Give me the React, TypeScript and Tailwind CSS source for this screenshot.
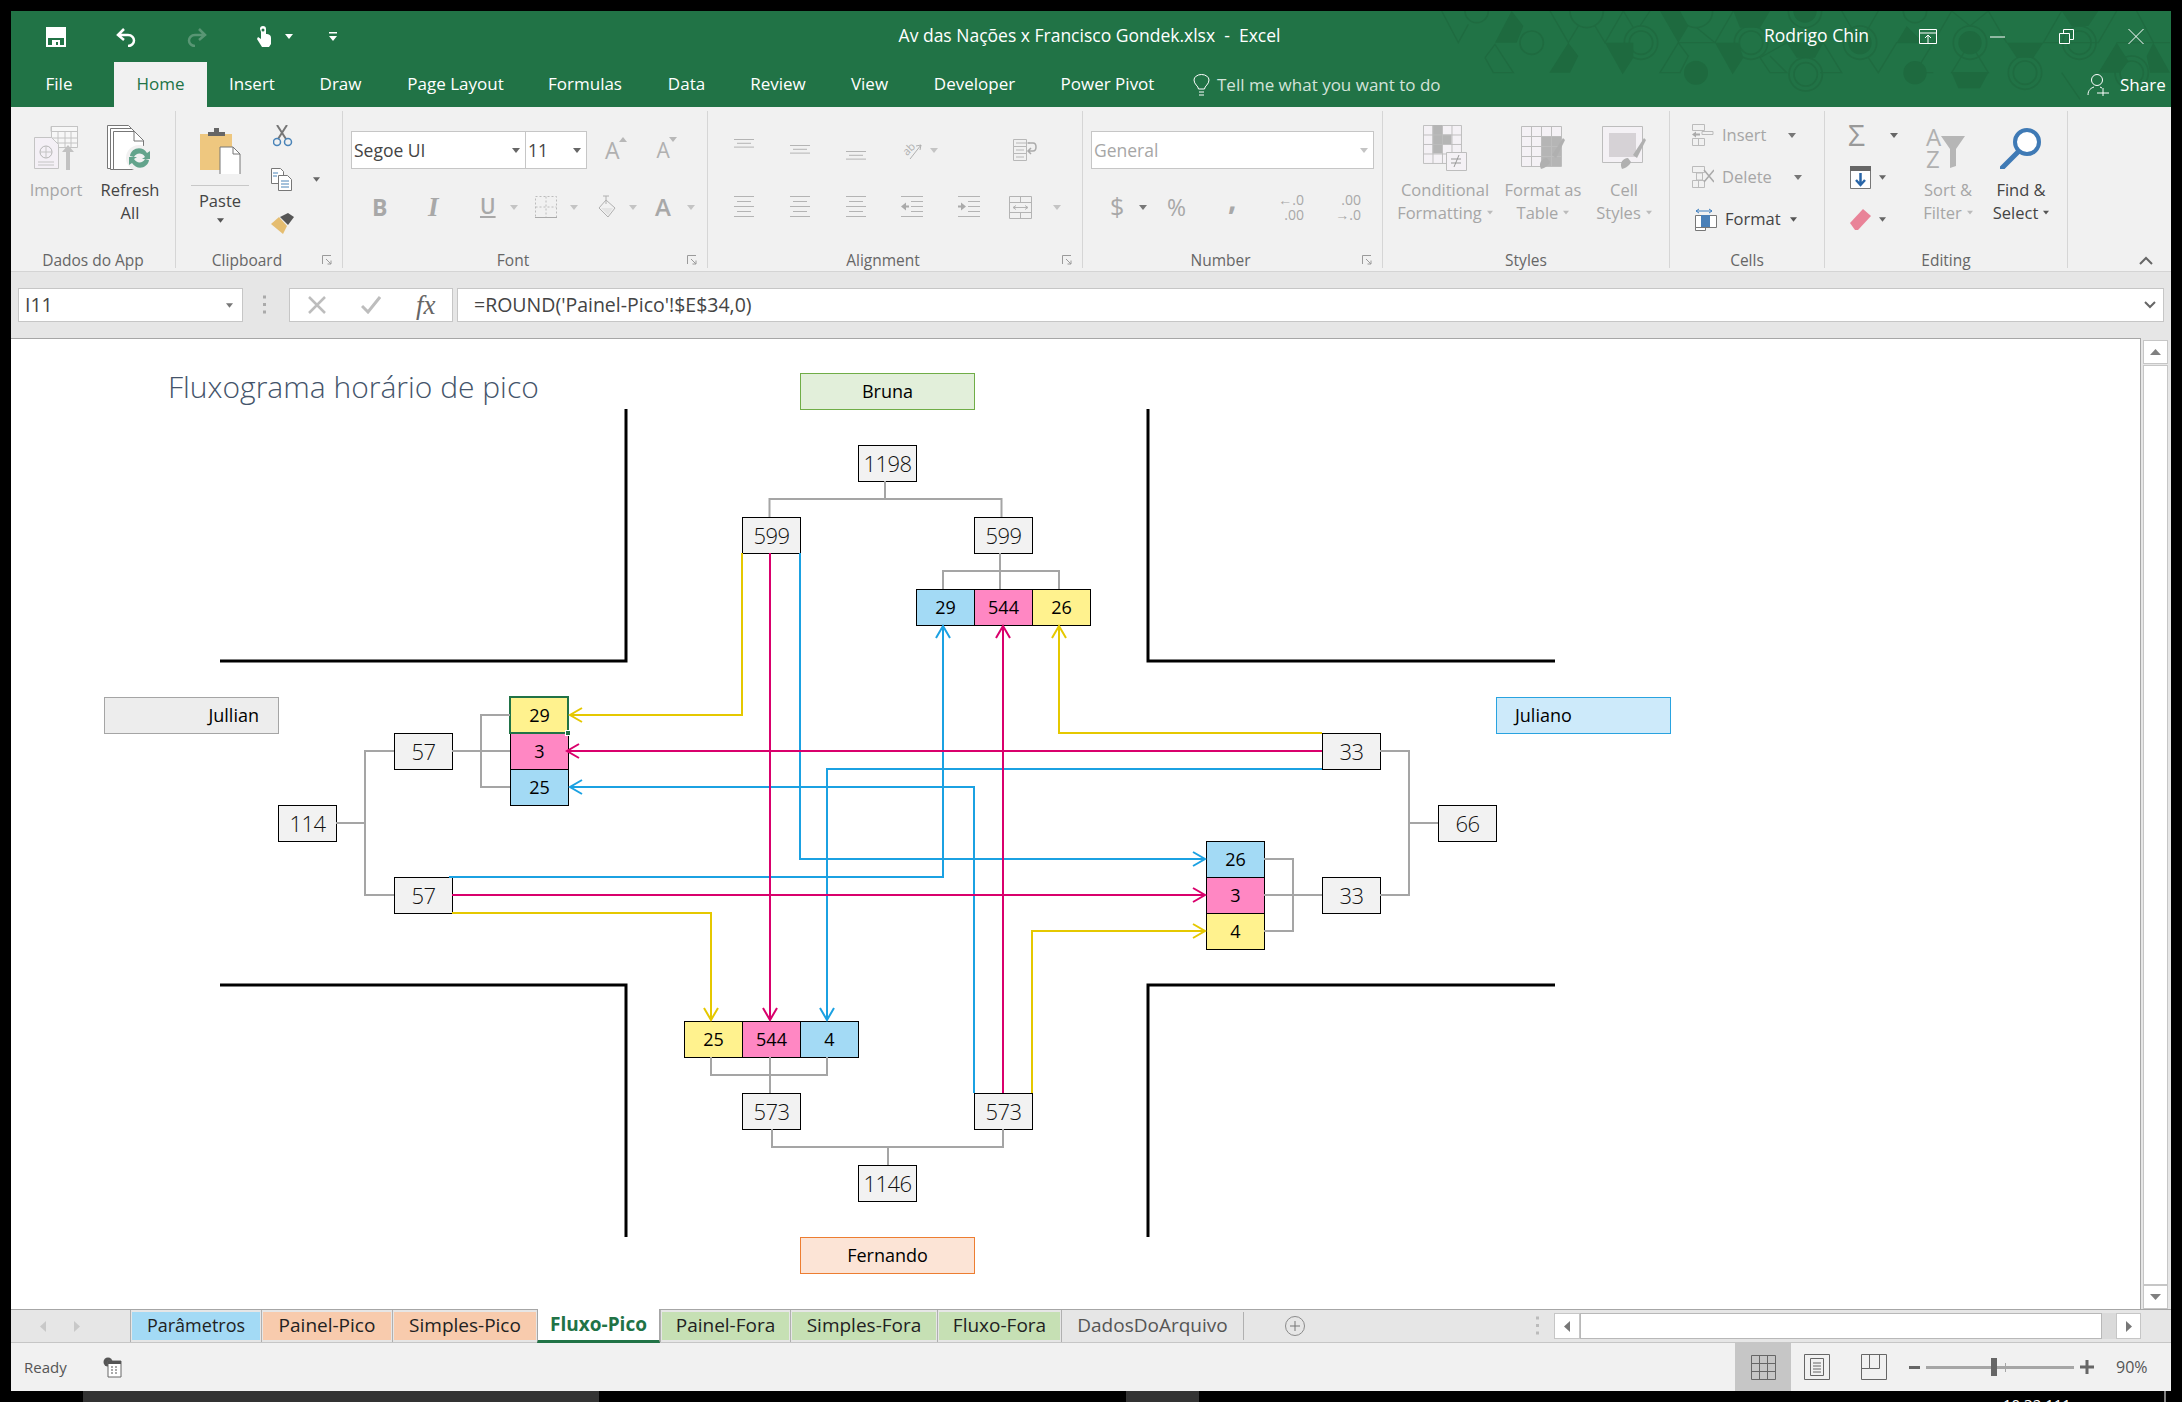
import React from "react";

const Caret = ({ c = "#666", w = 8 }: { c?: string; w?: number }) => (
  <svg width={w} height={5} viewBox="0 0 8 5" className="shrink-0"><path d="M0 0h8L4 5z" fill={c} /></svg>
);

function Pattern() {
  const d = "#1e6a3f";
  const s = "#1f6b40";
  const fills = [
    "215,0 165,95 230,95 250,45", "385,95 328,185 390,185 415,135", "495,95 580,95 580,140 548,190",
    "660,0 720,0 745,45 715,95", "825,95 895,95 910,140 878,190", "880,0 990,0 960,50 900,50",
    "1040,95 1150,95 1125,140 1070,140", "1370,95 1400,45 1450,95", "1700,95 1810,95 1780,140 1730,140",
    "1865,0 1975,0 1945,45 1895,45", "1975,185 2030,95 2065,150 2040,185", "2120,135 2140,95 2190,185 2130,185",
    "1535,185 1645,185 1620,232 1555,232",
  ];
  const lines = [
    "5,0 55,95 85,40", "135,140 165,100 220,185 160,185 135,140", "330,0 385,95 415,45", "465,45 495,95 550,0 580,50",
    "600,45 630,0", "715,95 660,185 720,185 745,135 715,95", "715,95 825,95 880,0", "770,50 825,95",
    "990,135 1040,185 990,185 960,140 1040,95", "1150,95 1205,185 1140,185", "1205,0 1260,95 1315,0",
    "1285,140 1315,185 1370,95 1480,95 1535,0 1590,45 1645,0", "1480,95 1425,185 1480,185",
    "1590,95 1535,185 1645,185 1590,95", "1700,95 1645,0", "1810,95 1865,0", "1865,185 1920,265", "1810,95 1975,95 2030,0",
    "2030,95 2190,95", "2090,0 2140,95",
  ];
  const rings: [number, number, number][] = [
    [110, 0, 35], [275, 95, 35], [440, 0, 50], [603, 95, 35], [603, 95, 50], [768, 0, 50], [933, 95, 35], [933, 95, 50],
    [1095, 0, 50], [1097, 190, 35], [1097, 190, 50], [1260, 95, 50], [1425, 0, 35], [1590, 95, 50], [1755, 185, 35],
    [1755, 185, 50], [1918, 95, 35], [1918, 95, 50], [2075, 185, 35], [2075, 185, 50],
  ];
  const dots: [number, number, number][] = [[768, 185, 36], [1095, 0, 35], [1260, 95, 35], [1425, 185, 35], [1590, 95, 35]];
  return (
    <svg className="absolute right-0 top-0 pointer-events-none" width={731} height={96} viewBox="0 0 2193 288">
      {lines.map((p, i) => <polyline key={i} points={p} fill="none" stroke={s} strokeWidth={4} />)}
      {rings.map(([x, y, r], i) => <circle key={i} cx={x} cy={y} r={r} fill="none" stroke={s} strokeWidth={5} />)}
      {fills.map((p, i) => <polygon key={i} points={p} fill={d} />)}
      {dots.map(([x, y, r], i) => <circle key={i} cx={x} cy={y} r={r} fill={d} />)}
    </svg>
  );
}

function TitleBar() {
  return (
    <div className="flex items-center h-[51px] text-white text-[17.500px] whitespace-nowrap relative z-10">
      <svg width={20} height={20} viewBox="0 0 20 20" className="ml-[35px]"><path d="M1 1h18v18H1z" fill="none" stroke="#fff" strokeWidth={2} /><path d="M1 1h18v10H1zM6 19v-6h8v6h-2v-4h-2v4z" fill="#fff" /></svg>
      <svg width={22} height={20} viewBox="0 0 22 20" className="ml-[49px]"><path d="M3 8h10c4 0 6 3 6 5.500S17 19 13 19M9 2L3 8l6 5" fill="none" stroke="#fff" strokeWidth={2.500} /></svg>
      <svg width={22} height={20} viewBox="0 0 22 20" className="ml-[49px] opacity-25"><path d="M19 8H9c-4 0-6 3-6 5.500S5 19 9 19M13 2l6 6-6 5" fill="none" stroke="#fff" strokeWidth={2.500} /></svg>
      <svg width={15} height={21} viewBox="0 0 15 21" className="ml-[48px]"><path d="M4 3a3 3 0 0 1 6 0v5c3 0 5 1 5 4v6l-2 3H6L1 13l1-2 3 2V6z" fill="#fff" /><circle cx={7} cy={4} r={1.500} fill="#217346" /></svg>
      <span className="ml-[14px]"><Caret c="#fff" /></span>
      <svg width={8} height={9} viewBox="0 0 8 9" className="ml-[36px]"><path d="M0 0h8v1.500H0zM0 4h8L4 9z" fill="#fff" /></svg>
      <span className="ml-[567px] w-[371px] flex justify-center whitespace-pre pb-[2px]">Av das Nações x Francisco Gondek.xlsx  -  Excel</span>
      <span className="ml-[490px] w-[103px] flex justify-center pb-[2px]">Rodrigo Chin</span>
      <svg width={18} height={15} viewBox="0 0 18 15" className="ml-[51px]"><path d="M.5.5h17v14H.5zM.5 4h17" fill="none" stroke="#fff" /><path d="M9 14V6M6 9l3-3 3 3" fill="none" stroke="#fff" /></svg>
      <svg width={15} height={2} viewBox="0 0 15 2" className="ml-[53px]"><path d="M0 1h15" stroke="#fff" /></svg>
      <svg width={15} height={15} viewBox="0 0 15 15" className="ml-[54px]"><path d="M.5 4.500h10v10H.5zM4.500 4.500v-4h10v10h-4" fill="none" stroke="#fff" /></svg>
      <svg width={16} height={15} viewBox="0 0 16 15" className="ml-[54px]"><path d="M.5 0l15 15M15.500 0L.5 15" stroke="#fff" /></svg>
    </div>
  );
}

const menu: [string, string][] = [
  ["File", "w-[103px] pr-[7px]"], ["Home", "w-[93px]"], ["Insert", "w-[90px]"], ["Draw", "w-[87px]"], ["Page Layout", "w-[143px]"],
  ["Formulas", "w-[116px]"], ["Data", "w-[87px]"], ["Review", "w-[96px]"], ["View", "w-[87px]"], ["Developer", "w-[123px]"], ["Power Pivot", "w-[143px]"],
];

function TabRow() {
  return (
    <div className="flex items-stretch h-[45px] text-white text-[17px] whitespace-nowrap relative z-10">
      {menu.map(([t, w]) => (
        <div key={t} className={`${w} flex items-center justify-center pb-[2px] ${t === "Home" ? "bg-[#f1f1f1] text-[#217346]" : ""}`}>{t}</div>
      ))}
      <div className="flex items-center text-[#d3e3da]">
        <svg width={17} height={22} viewBox="0 0 17 22" className="ml-[14px]"><path d="M5.500 15c0-3-4.500-4.500-4.500-9a7.500 5.500 0 0 1 15 0c0 4.500-4.500 6-4.500 9zM6 18h5M6 21h5" fill="none" stroke="#fff" /></svg>
        <span className="ml-[7px] w-[225px]">Tell me what you want to do</span>
        <svg width={22} height={24} viewBox="0 0 22 24" className="ml-[645px]"><circle cx={10} cy={7} r={5.500} fill="none" stroke="#fff" /><path d="M1 22c0-5 3-7 6-8M13 14l2 1M10 20h12M16 15v8" fill="none" stroke="#fff" /></svg>
        <span className="ml-[11px] text-white">Share</span>
      </div>
    </div>
  );
}

const Launcher = () => (
  <svg width={10} height={10} viewBox="0 0 10 10" className="absolute right-[10px] top-[3px]"><path d="M.5 9V.5H9M4 4l5 5M9 5.500V9H5.500" fill="none" stroke="#9a9a9a" /></svg>
);

function Group({ w, label, launcher, children }: { w: string; label: string; launcher?: boolean; children: React.ReactNode }) {
  return (
    <div className={`${w} h-[157px] mt-[4px] border-r border-[#d6d6d6] flex flex-col shrink-0`}>
      <div className="h-[141px]">{children}</div>
      <div className={`h-[16px] relative flex items-center justify-center text-[15.500px] leading-[16px] text-[#666] ${launcher ? "pr-[24px]" : ""}`}>
        {label}
        {launcher && <Launcher />}
      </div>
    </div>
  );
}

function Big({ w, icon, lines, dis, caret }: { w: string; icon: React.ReactNode; lines: string[]; dis?: boolean; caret?: boolean }) {
  return (
    <div className={`${w} flex flex-col items-center pt-[14px] ${dis ? "text-[#a6a6a6]" : "text-[#444]"}`}>
      <div className="h-[46px] flex items-center justify-center">{icon}</div>
      <div className="mt-[7px] h-[23px] leading-[23px] whitespace-nowrap">{lines[0]}</div>
      <div className="h-[23px] leading-[23px] whitespace-nowrap flex items-center gap-[5px]">{lines[1]}{caret && <Caret c={dis ? "#bbb" : "#555"} w={6} />}</div>
    </div>
  );
}

const Lines = ({ rows, h = 22 }: { rows: number; h?: number }) => {
  const out = [];
  for (let i = 0; i < rows; i++) {
    const short = i % 2 === 1;
    const x = short ? 3 : 0;
    const l = short ? 14 : 20;
    out.push(<path key={i} d={`M${x} ${i * (rows === 3 ? 3.800 : 5) + 0.5}h${l}`} stroke="#b4b4b4" />);
  }
  return <svg width={20} height={h} viewBox={`0 0 20 ${h}`} className="shrink-0">{out}</svg>;
};

const grayGrid = (dark: string) => (
  <g fill="none" stroke="#bdbdbd">
    <path d="M.5.5h40v40H.5z" fill="#f4f1f5" />
    <path d={dark} fill="#b5b5b5" stroke="none" />
    <path d="M.5 10.500h40M.5 20.500h40M.5 30.500h40M10.500.5v40M20.500.5v40M30.500.5v40" />
  </g>
);

function Ribbon() {
  return (
    <div className="flex h-[165px] bg-[#f1f1f1] text-[16.500px] border-b border-[#d4d4d4] relative">
      <Group w="w-[165px]" label="Dados do App">
        <div className="flex pl-[8px]">
          <Big w="w-[74px]" dis lines={["Import", ""]} icon={
            <svg width={44} height={44} viewBox="0 0 44 44"><path d="M17.500.5h26v21h-26z" fill="#f7f7f7" stroke="#c4c4c4" /><path d="M17 .5h27v5H17zM24 6v15M31 6v15M37 6v15M18 12h25M18 17h25" fill="none" stroke="#c4c4c4" /><path d="M.5 11.500h17l7 7v24H.5z" fill="#f4f0f6" stroke="#c4c4c4" /><circle cx={12} cy={26} r={6} fill="none" stroke="#b4b4b4" /><path d="M6 26h12M12 20v12M4 36h16M4 39h16" stroke="#c4c4c4" /><path d="M36 44V26h-4l6-7 6 7h-4v18z" fill="#c2c2c2" transform="translate(-4 0)" /></svg>} />
          <Big w="w-[74px]" lines={["Refresh", "All"]} icon={
            <svg width={46} height={46} viewBox="0 0 46 46"><path d="M.5.5h21l8 8v35H.5z" fill="#fff" stroke="#777" /><path d="M3.500 3.500h21l8 8v33H3.500z" fill="#fff" stroke="#777" /><path d="M6.500 6.500h21l9 9v29h-30z" fill="#fff" stroke="#777" /><path d="M27 6v10h10" fill="none" stroke="#777" /><circle cx={32} cy={33} r={13} fill="#f1f1f1" /><path d="M23 31c1-8 12-11 17-3l3-2v8h-8l3-2c-3-5-9-4-11 0zM42 35c-1 8-12 11-17 3l-3 2v-8h8l-3 2c3 5 9 4 11 0z" fill="#63a48c" /></svg>} />
        </div>
      </Group>
      <Group w="w-[167px]" label="Clipboard" launcher>
        <div className="flex pl-[15px]">
          <div className="w-[58px] flex flex-col items-center pt-[17px] text-[#444]">
            <svg width={41} height={46} viewBox="0 0 41 46"><path d="M0 6h32v36H0z" fill="#eec77f" /><path d="M8 8V4h6V0h5v4h6v4z" fill="#666" /><path d="M20 19h13l7 7v21H20z" fill="#fff" stroke="#777" /><path d="M33 19v7h7" fill="none" stroke="#777" /></svg>
            <div className="w-[58px] mt-[11px] border-t border-[#c8c8c8]" />
            <div className="mt-[3px] h-[23px] leading-[23px]">Paste</div>
            <div className="mt-[6px]"><Caret c="#555" w={7} /></div>
          </div>
          <div className="pl-[22px] pt-[14px] flex flex-col">
            <svg width={20} height={22} viewBox="0 0 20 22" className="ml-[2px]"><path d="M4 0l9 14M14 0L5 14" stroke="#777" strokeWidth={2} fill="none" /><circle cx={4} cy={17} r={3.500} fill="none" stroke="#4a84b8" strokeWidth={1.500} /><circle cx={15} cy={17} r={3.500} fill="none" stroke="#4a84b8" strokeWidth={1.500} /></svg>
            <div className="flex items-center mt-[21px]">
              <svg width={21} height={23} viewBox="0 0 21 23"><path d="M.5.5h9l3 3v12H.5z" fill="#fff" stroke="#777" /><path d="M7.500 7.500h9l4 4v11h-13z" fill="#fff" stroke="#777" /><path d="M10 13h8M10 16h8M10 19h8M2 5h5M2 8h4" stroke="#4a84b8" /></svg>
              <span className="ml-[21px]"><Caret c="#666" w={7} /></span>
            </div>
            <svg width={23} height={21} viewBox="0 0 23 21" className="mt-[22px]"><path d="M0 11l8-7 8 9-4 8z" fill="#e5bd70" /><path d="M9 4l8 8 6-8-6-4z" fill="#555" /></svg>
          </div>
        </div>
      </Group>
      <Group w="w-[365px]" label="Font" launcher>
        <div className="flex items-center pl-[8px] pt-[20px] text-[17.500px]">
          <div className="w-[175px] h-[38px] bg-white border border-[#c6c6c6] flex items-center justify-between pl-[2px] pr-[5px] text-[#444]">Segoe UI<Caret c="#666" /></div>
          <div className="w-[62px] h-[38px] -ml-px bg-white border border-[#c6c6c6] flex items-center justify-between pl-[2px] pr-[5px] text-[#444]">11<Caret c="#666" /></div>
          <div className="flex items-start ml-[18px] text-[#b0b0b0] text-[23px] leading-[30px] font-medium">
            <span>A</span><svg width={8} height={5} viewBox="0 0 8 5" className="mt-[2px] -ml-[1px]"><path d="M0 5h8L4 0z" fill="#b8b8b8" /></svg>
            <span className="ml-[30px] text-[21px]">A</span><svg width={8} height={5} viewBox="0 0 8 5" className="mt-[2px] -ml-[1px]"><path d="M0 0h8L4 5z" fill="#b8b8b8" /></svg>
          </div>
        </div>
        <div className="flex items-center h-[30px] mt-[23px] text-[#a8a8a8]">
          <span className="ml-[29px] w-[13px] font-bold text-[23px]">B</span>
          <span className="ml-[43px] w-[12px] italic font-bold font-['Liberation_Serif',serif] text-[27px]">I</span>
          <span className="ml-[40px] w-[15px] underline font-semibold text-[21px]">U</span>
          <span className="ml-[15px]"><Caret c="#c4c4c4" /></span>
          <svg width={22} height={22} viewBox="0 0 22 22" className="ml-[17px]"><path d="M.5.5h21v21H.5zM.5 11h21M11 .5v21" fill="none" stroke="#bcbcbc" strokeDasharray="2 2" /><path d="M0 21.500h22" stroke="#aaa" /></svg>
          <span className="ml-[13px]"><Caret c="#c4c4c4" /></span>
          <svg width={20} height={24} viewBox="0 0 20 24" className="ml-[19px]"><path d="M9 5l9 8-7 9-9-9zM9 9V1M6 1h6" fill="none" stroke="#b0b0b0" /><path d="M4 13h12l-5 7z" fill="#e4e4e4" /></svg>
          <span className="ml-[12px]"><Caret c="#c4c4c4" /></span>
          <span className="ml-[18px] w-[17px] font-semibold text-[24px]">A</span>
          <span className="ml-[15px]"><Caret c="#c4c4c4" /></span>
        </div>
      </Group>
      <Group w="w-[375px]" label="Alignment" launcher>
        <div className="flex items-start h-[26px] mt-[26px]">
          <span className="ml-[26px] mt-[2px]"><Lines rows={3} h={10} /></span>
          <span className="ml-[36px] mt-[8px]"><Lines rows={3} h={10} /></span>
          <span className="ml-[36px] mt-[14px]"><Lines rows={3} h={10} /></span>
          <svg width={20} height={20} viewBox="0 0 20 20" className="ml-[36px] mt-[4px] overflow-visible"><text x={1} y={12} fontSize={11} fill="#b0b0b0" transform="rotate(-45 7 9)">ab</text><path d="M8 18L19 4M19 4l-1 5M19 4l-5 1" fill="none" stroke="#b0b0b0" /></svg>
          <span className="ml-[8px] mt-[11px]"><Caret c="#c4c4c4" /></span>
          <svg width={24} height={22} viewBox="0 0 24 22" className="ml-[75px] mt-[2px]"><path d="M.5.5h13v7H.5zM.5 7.500h13v7H.5zM.5 14.500h13v7H.5zM3 4h14M3 11h8M3 18h8" fill="none" stroke="#b8b8b8" /><path d="M15 4h5c4 0 4 8 0 8h-4M18 9l-3 3 3 3" fill="none" stroke="#aaa" strokeWidth={1.500} /></svg>
        </div>
        <div className="flex items-center h-[30px] mt-[29px]">
          <span className="ml-[26px] flex"><Lines rows={5} /></span>
          <span className="ml-[36px] flex"><Lines rows={5} /></span>
          <span className="ml-[36px] flex"><Lines rows={5} /></span>
          <svg width={23} height={22} viewBox="0 0 23 22" className="ml-[35px]"><path d="M0 .5h22M10 5.500h12M10 10.500h12M10 15.500h12M0 20.500h22" stroke="#b4b4b4" /><path d="M0 10.500l5-4v3h3v2H5v3z" fill="#aaa" /></svg>
          <svg width={23} height={22} viewBox="0 0 23 22" className="ml-[34px]"><path d="M0 .5h22M10 5.500h12M10 10.500h12M10 15.500h12M0 20.500h22" stroke="#b4b4b4" /><path d="M8 10.500l-5-4v3H0v2h3v3z" fill="#aaa" /></svg>
          <svg width={24} height={23} viewBox="0 0 24 23" className="ml-[28px]"><path d="M.5.5h22v22H.5zM.5 6.500h22M.5 16.500h22M11.500.5v6M11.500 16.500v6M4 11.500h15M4 11.500l3-2M4 11.500l3 2M19 11.500l-3-2M19 11.500l-3 2" fill="none" stroke="#b4b4b4" /></svg>
          <span className="ml-[20px]"><Caret c="#c4c4c4" /></span>
        </div>
      </Group>
      <Group w="w-[300px]" label="Number" launcher>
        <div className="pl-[8px] pt-[20px] text-[17.500px]">
          <div className="w-[283px] h-[38px] bg-white border border-[#c6c6c6] flex items-center justify-between pl-[2px] pr-[5px] text-[#a6a6a6]">General<Caret c="#c4c4c4" /></div>
        </div>
        <div className="flex items-center h-[30px] mt-[23px] text-[#a8a8a8]">
          <span className="ml-[27px] w-[12px] text-[25px]">$</span>
          <span className="ml-[17px]"><Caret c="#777" /></span>
          <span className="ml-[20px] w-[21px] text-[23px]">%</span>
          <span className="ml-[40px] w-[10px] text-[30px] font-bold leading-[20px] pb-[16px]">,</span>
          <span className="ml-[40px] w-[26px] flex flex-col text-[14px] leading-[15px] items-end"><span>←.0</span><span>.00</span></span>
          <span className="ml-[31px] w-[26px] flex flex-col text-[14px] leading-[15px] items-end"><span>.00</span><span>→.0</span></span>
        </div>
      </Group>
      <Group w="w-[287px]" label="Styles">
        <div className="flex pl-[12px]">
          <Big w="w-[100px]" dis caret lines={["Conditional", "Formatting"]} icon={
            <svg width={44} height={46} viewBox="0 0 44 46"><g transform="scale(.95)">{grayGrid("M10 0h10v10h10v10H20v10H10z")}</g><path d="M23.500 27.500h20v18h-20z" fill="#f4f1f5" stroke="#bdbdbd" /><path d="M28 34h10M28 38h10M36 30l-5 12" stroke="#999" fill="none" /></svg>} />
          <Big w="w-[96px]" dis caret lines={["Format as", "Table"]} icon={
            <svg width={44} height={44} viewBox="0 0 44 44"><g>{grayGrid("M20 10h20v30H20z")}</g><path d="M20 43c-3-6 1-11 6-11l3 4c-1 3-5 6-9 7zM31 29l11-17 2 2-9 18z" fill="#b0b0b0" /></svg>} />
          <Big w="w-[66px]" dis caret lines={["Cell", "Styles"]} icon={
            <svg width={44} height={44} viewBox="0 0 44 44"><path d="M.5.5h40v36H.5z" fill="#f4f1f5" stroke="#bdbdbd" /><path d="M7 7h27v24H7z" fill="#d6d2d6" /><path d="M20 43c-3-6 1-11 6-11l3 4c-1 3-5 6-9 7zM31 29l11-17 2 2-9 18z" fill="#b0b0b0" /></svg>} />
        </div>
      </Group>
      <Group w="w-[155px]" label="Cells">
        <div className="flex flex-col pt-[3px]">
          <div className="flex items-center h-[42px] text-[#a6a6a6]">
            <svg width={22} height={22} viewBox="0 0 22 22" className="ml-[22px]"><path d="M.5.5h12v6H.5zM.5 14.500h12v7H.5zM6.500 14.500v7M10 10.500h11v-3H10z" fill="none" stroke="#bbb" /><path d="M0 10.500l4-3v2h4v2H4v2z" fill="#aaa" /></svg>
            <span className="ml-[8px] w-[66px]">Insert</span><Caret c="#777" />
          </div>
          <div className="flex items-center h-[42px] text-[#a6a6a6]">
            <svg width={22} height={22} viewBox="0 0 22 22" className="ml-[22px]"><path d="M.5.5h12v6H.5zM.5 14.500h12v7H.5zM6.500 14.500v7M4.500 7v7h6V7z" fill="none" stroke="#bbb" /><path d="M12 4l10 12M22 4L12 16" stroke="#aaa" strokeWidth={1.500} /></svg>
            <span className="ml-[8px] w-[72px]">Delete</span><Caret c="#777" />
          </div>
          <div className="flex items-center h-[42px] text-[#444]">
            <svg width={22} height={24} viewBox="0 0 22 24" className="ml-[25px]"><path d="M1 4h16M1 4l3-2M1 4l3 2M17 4l-3-2M17 4l-3 2" stroke="#3f7fbf" fill="none" /><path d="M.5 8.500h21v12H.5zM.5 20.500h10v3H.5z" fill="#fff" stroke="#777" /><path d="M6 8h9v12H6z" fill="#4a80b8" /></svg>
            <span className="ml-[8px] w-[65px]">Format</span><Caret c="#555" w={7} />
          </div>
        </div>
      </Group>
      <Group w="w-[243px]" label="Editing">
        <div className="flex">
          <div className="w-[78px] flex flex-col pt-[3px]">
            <div className="flex items-center h-[42px] ml-[23px]"><span className="w-[22px] text-[30px] leading-[30px] text-[#999]">Σ</span><span className="ml-[20px]"><Caret c="#666" /></span></div>
            <div className="flex items-center h-[42px] ml-[25px]">
              <svg width={21} height={23} viewBox="0 0 21 23"><path d="M.5.5h20v22H.5z" fill="#fff" stroke="#777" /><path d="M0 0h21v5H0z" fill="#666" /><path d="M10.500 7v12M6 14l4.500 5 4.500-5" fill="none" stroke="#2a66a8" strokeWidth={2.500} /></svg>
              <span className="ml-[8px]"><Caret c="#666" w={7} /></span>
            </div>
            <div className="flex items-center h-[42px] ml-[25px]">
              <svg width={21} height={21} viewBox="0 0 21 21"><path d="M0 14L13 0l8 7L8 21H5z" fill="#e98398" /></svg>
              <span className="ml-[8px]"><Caret c="#666" w={7} /></span>
            </div>
          </div>
          <Big w="w-[90px]" dis caret lines={["Sort &", "Filter"]} icon={
            <div className="flex items-start w-[44px] h-[44px]">
              <span className="flex flex-col text-[24px] text-[#b0b0b0]"><span className="h-[22px] leading-[22px]">A</span><span className="h-[22px] leading-[22px]">Z</span></span>
              <svg width={24} height={32} viewBox="0 0 24 32" className="mt-[10px]"><path d="M0 0h24l-9 13v17l-6 2V13z" fill="#b6b6b6" /></svg>
            </div>} />
          <Big w="w-[56px]" caret lines={["Find &", "Select"]} icon={
            <svg width={42} height={42} viewBox="0 0 42 42"><circle cx={27} cy={15} r={12} fill="#fff" stroke="#3f7ab5" strokeWidth={4} /><path d="M18 25L2 41" stroke="#3f7ab5" strokeWidth={5} strokeLinecap="round" /></svg>} />
        </div>
      </Group>
      <svg width={14} height={9} viewBox="0 0 14 9" className="ml-[71px] mt-[149px]"><path d="M1 8l6-6 6 6" fill="none" stroke="#666" strokeWidth={2} /></svg>
    </div>
  );
}

function FormulaBar() {
  return (
    <div className="flex items-center h-[66px] bg-[#e6e6e6] text-[#444] text-[19.500px]">
      <div className="ml-[7px] w-[225px] h-[34px] bg-white border border-[#c6c6c6] flex items-center justify-between pl-[6px] pr-[9px]">I11<Caret c="#777" w={7} /></div>
      <svg width={4} height={20} viewBox="0 0 4 20" className="ml-[20px]"><path d="M0 2h3M0 9.500h3M0 17h3" stroke="#aaa" strokeWidth={3} /></svg>
      <div className="ml-[22px] w-[164px] h-[34px] bg-white border border-[#c6c6c6] flex items-center">
        <svg width={18} height={18} viewBox="0 0 18 18" className="ml-[18px]"><path d="M1 1l16 16M17 1L1 17" stroke="#bdbdbd" strokeWidth={2.500} /></svg>
        <svg width={20} height={18} viewBox="0 0 20 18" className="ml-[35px]"><path d="M1 10l6 6L19 1" fill="none" stroke="#bdbdbd" strokeWidth={3} /></svg>
        <span className="ml-[35px] italic font-['Liberation_Serif',serif] text-[27px] leading-[30px] text-[#666]">fx</span>
      </div>
      <div className="ml-[4px] flex-1 mr-[7px] h-[34px] bg-white border border-[#c6c6c6] flex items-center justify-between pl-[16px] pr-[7px]">
        =ROUND('Painel-Pico'!$E$34,0)
        <svg width={12} height={8} viewBox="0 0 12 8"><path d="M1 1l5 5 5-5" fill="none" stroke="#666" strokeWidth={2} /></svg>
      </div>
    </div>
  );
}

const cls: Record<string, string> = {
  g: "bg-[#f2f2f2] border-black text-[#111] font-light text-[22px] tracking-[-0.500px]",
  y: "bg-[#fff28e] border-black text-black text-[18px]",
  p: "bg-[#ff87c3] border-black text-black text-[18px]",
  b: "bg-[#a3daf5] border-black text-black text-[18px]",
};
const cells: [number, number, string, string][] = [
  [-1, 2, "1198", "g"], [-3, 4, "599", "g"], [1, 4, "599", "g"],
  [0, 6, "29", "b"], [1, 6, "544", "p"], [2, 6, "26", "y"],
  [-7, 9, "29", "y"], [-7, 10, "3", "p"], [-7, 11, "25", "b"],
  [-9, 10, "57", "g"], [-9, 14, "57", "g"], [-11, 12, "114", "g"],
  [7, 10, "33", "g"], [7, 14, "33", "g"], [9, 12, "66", "g"],
  [5, 13, "26", "b"], [5, 14, "3", "p"], [5, 15, "4", "y"],
  [-4, 18, "25", "y"], [-3, 18, "544", "p"], [-2, 18, "4", "b"],
  [-3, 20, "573", "g"], [1, 20, "573", "g"], [-1, 22, "1146", "g"],
];
const X = (n: number) => 905 + 58 * n;
const Y = (n: number) => 34 + 36 * n;

const gray = [
  "M885 481V499M769.500 517V499H1001.500V517", "M1000 553V589M943 589V571H1059V589",
  "M336 823H365M394 751H365V895H394", "M452 751H510M510 715H481V787H510",
  "M1438 823H1409M1380 751H1409V895H1380", "M1264 895H1322M1264 859H1293V931H1264",
  "M711 1057V1075H827V1057M770 1057V1093", "M772 1129V1147H1003V1129M888 1147V1165",
];
const black = ["M220 661H626V409", "M1555 661H1148V409", "M220 985H626V1237", "M1555 985H1148V1237"];
const yellow = ["M742 553V715H570", "M1322 733H1059V627", "M452 913H711V1020", "M1032 1093V931H1205"];
const pink = ["M770 553V1020", "M1322 751H567", "M452 895H1205", "M1003 1093V627"];
const blue = ["M800 553V859H1205", "M1322 769H827V1020", "M449 877H943V627", "M974 1093V787H570"];
const heads = (x: number, y: number, dir: string) => {
  const l = 12, h = 7;
  if (dir === "l") return `M${x + l} ${y - h}L${x} ${y}L${x + l} ${y + h}`;
  if (dir === "r") return `M${x - l} ${y - h}L${x} ${y}L${x - l} ${y + h}`;
  if (dir === "u") return `M${x - h} ${y + l}L${x} ${y}L${x + h} ${y + l}`;
  return `M${x - h} ${y - l}L${x} ${y}L${x + h} ${y - l}`;
};
const yh = [heads(570, 715, "l"), heads(1059, 626, "u"), heads(711, 1020, "d"), heads(1205, 931, "r")];
const ph = [heads(567, 751, "l"), heads(1003, 626, "u"), heads(770, 1020, "d"), heads(1205, 895, "r")];
const bh = [heads(570, 787, "l"), heads(943, 626, "u"), heads(827, 1020, "d"), heads(1205, 859, "r")];

function Node({ x, y, w, className, children }: { x: number; y: number; w: number; className: string; children: React.ReactNode }) {
  return (
    <div className={`absolute h-[37px] border flex items-center ${className}`} style={{ left: x, top: y, width: w }}>{children}</div>
  );
}

function Sheet() {
  return (
    <div className="flex h-[971px]">
      <div className="relative w-[2130px] bg-white border-t border-r border-[#a6a6a6] overflow-hidden">
        <div className="absolute left-[157px] top-[30px] text-[30px] leading-[36px] font-light text-[#44546a] whitespace-nowrap">Fluxograma horário de pico</div>
        <Node x={X(-2)} y={Y(0)} w={175} className="bg-[#e2efda] border-[#70ad47] justify-center text-[18px] text-black">Bruna</Node>
        <Node x={X(-14)} y={Y(9)} w={175} className="bg-[#ededed] border-[#a5a5a5] justify-end pr-[19px] text-[18px] text-black">Jullian</Node>
        <Node x={X(10)} y={Y(9)} w={175} className="bg-[#cdeafa] border-[#29a3e0] pl-[18px] text-[18px] text-black">Juliano</Node>
        <Node x={X(-2)} y={Y(24)} w={175} className="bg-[#fce4d6] border-[#ed7d31] justify-center text-[18px] text-black">Fernando</Node>
        {cells.map(([c, r, t, k], i) => (
          <Node key={i} x={X(c)} y={Y(r)} w={59} className={`justify-center ${cls[k]}`}>{t}</Node>
        ))}
        <div className="absolute border-2 border-[#217346] h-[38px] w-[60px]" style={{ left: X(-7) - 1, top: Y(9) - 1 }} />
        <svg className="absolute left-0 top-0 pointer-events-none" width={2130} height={971} viewBox="11 339 2130 971">
          <g fill="none">
            <g stroke="#a5a5a5" strokeWidth={2}>{gray.map((d) => <path key={d} d={d} />)}</g>
            <g stroke="#000" strokeWidth={3}>{black.map((d) => <path key={d} d={d} />)}</g>
            <g stroke="#e5c800" strokeWidth={2}>{yellow.concat(yh).map((d) => <path key={d} d={d} />)}</g>
            <g stroke="#1ba1e2" strokeWidth={2}>{blue.concat(bh).map((d) => <path key={d} d={d} />)}</g>
            <g stroke="#d9006c" strokeWidth={2}>{pink.concat(ph).map((d) => <path key={d} d={d} />)}</g>
          </g>
        </svg>
        <div className="absolute w-[6px] h-[6px] bg-[#217346] border border-white" style={{ left: 554, top: 391 }} />
      </div>
      <div className="flex-1 bg-[#e6e6e6] flex flex-col pl-[2px] pr-[3px] pt-px border-t border-[#e6e6e6]">
        <div className="h-[24px] bg-white border border-[#c6c6c6] flex items-center justify-center"><svg width={11} height={6} viewBox="0 0 11 6"><path d="M0 6h11L5.500 0z" fill="#808080" /></svg></div>
        <div className="h-[921px] mt-[1px] bg-white border border-[#c6c6c6]" />
        <div className="h-[24px] bg-white border border-[#c6c6c6] flex items-center justify-center"><svg width={11} height={6} viewBox="0 0 11 6"><path d="M0 0h11L5.500 6z" fill="#808080" /></svg></div>
      </div>
    </div>
  );
}

const tabs: [string, string, string][] = [
  ["Parâmetros", "w-[131px]", "bg-[#a3daf5] text-[18px]"], ["Painel-Pico", "w-[131px]", "bg-[#f8cbad]"], ["Simples-Pico", "w-[145px]", "bg-[#f8cbad]"],
  ["Fluxo-Pico", "w-[123px]", ""], ["Painel-Fora", "w-[130px]", "bg-[#c6e0b4]"], ["Simples-Fora", "w-[147px]", "bg-[#c6e0b4]"], ["Fluxo-Fora", "w-[124px]", "bg-[#c6e0b4]"],
  ["DadosDoArquivo", "w-[182px]", ""],
];

function SheetTabs() {
  return (
    <div className="flex h-[34px] bg-[#e6e6e6] border-t border-[#a6a6a6] border-b-[#c6c6c6] border-b text-[19px] text-[#222] whitespace-nowrap">
      <div className="w-[119px] flex items-center">
        <svg width={6} height={11} viewBox="0 0 6 11" className="ml-[29px]"><path d="M6 0v11L0 5.500z" fill="#c8c8c8" /></svg>
        <svg width={6} height={11} viewBox="0 0 6 11" className="ml-[28px]"><path d="M0 0v11l6-5.500z" fill="#c8c8c8" /></svg>
      </div>
      {tabs.map(([t, w, bg]) => t === "Fluxo-Pico" ? (
        <div key={t} className={`${w} -mt-px mb-[-1px] bg-white border-x border-[#a6a6a6] border-b-[3px] border-b-[#217346] flex items-center justify-center font-bold text-[#217346] text-[19px]`}>{t}</div>
      ) : (
        <div key={t} className={`${w} border-l border-[#b0b0b0] pl-px pr-[1px] py-[2px] flex`}>
          <div className={`flex-1 flex items-center justify-center pb-[2px] ${bg} ${t === "DadosDoArquivo" ? "text-[#555]" : ""}`}>{t}</div>
        </div>
      ))}
      <div className="border-l border-[#b0b0b0] my-[2px]" />
      <svg width={20} height={20} viewBox="0 0 20 20" className="ml-[41px] mt-[6px]"><circle cx={10} cy={10} r={9.500} fill="none" stroke="#8a8a8a" /><path d="M5 10h10M10 5v10" stroke="#777" /></svg>
      <svg width={4} height={20} viewBox="0 0 4 20" className="ml-[231px] mt-[6px]"><path d="M0 2h3M0 9.500h3M0 17h3" stroke="#bbb" strokeWidth={3} /></svg>
      <div className="ml-[14px] flex items-center h-[26px] mt-[3px]">
        <div className="w-[26px] h-full bg-white border border-[#c6c6c6] flex items-center justify-center"><svg width={6} height={11} viewBox="0 0 6 11"><path d="M6 0v11L0 5.500z" fill="#777" /></svg></div>
        <div className="w-[522px] h-full bg-white border border-[#b8b8b8]" />
        <div className="w-[14px] h-full bg-[#dadada]" />
        <div className="w-[25px] h-full bg-white border border-[#c6c6c6] flex items-center justify-center"><svg width={6} height={11} viewBox="0 0 6 11"><path d="M0 0v11l6-5.500z" fill="#777" /></svg></div>
      </div>
    </div>
  );
}

function StatusBar() {
  return (
    <div className="flex items-center h-[48px] bg-[#f1f1f1] text-[15px] text-[#555] whitespace-nowrap">
      <span className="ml-[13px] w-[42px]">Ready</span>
      <svg width={19} height={21} viewBox="0 0 19 21" className="ml-[37px]"><circle cx={5} cy={5} r={4.500} fill="#555" /><path d="M5 4h13v16H5z" fill="#fff" stroke="#666" /><path d="M5 4h13v3H5z" fill="#555" /><path d="M8 10h2M12 10h2M8 13h2M12 13h2M8 16h2M12 16h2" stroke="#555" /></svg>
      <div className="ml-[1613px] w-[56px] h-full bg-[#c6c6c6] flex items-center justify-center">
        <svg width={25} height={25} viewBox="0 0 25 25"><path d="M.5.5h24v24H.5zM.5 8.500h24M.5 16.500h24M8.500.5v24M16.500.5v24" fill="none" stroke="#666" /></svg>
      </div>
      <svg width={26} height={26} viewBox="0 0 26 26" className="ml-[13px]"><path d="M.5.5h25v25H.5z" fill="none" stroke="#666" /><path d="M6.500 4.500h13v17h-13zM9 9h8M9 12h8M9 15h8M9 18h8" fill="none" stroke="#666" /></svg>
      <svg width={26} height={26} viewBox="0 0 26 26" className="ml-[31px]"><path d="M.5.5h25v25H.5zM8.500.5v14h10V.5M.5 14.500h8" fill="none" stroke="#666" /></svg>
      <svg width={11} height={3} viewBox="0 0 11 3" className="ml-[22px]"><path d="M0 0h11v3H0z" fill="#666" /></svg>
      <div className="ml-[6px] w-[148px] h-[3px] bg-[#a6a6a6] flex items-center">
        <div className="ml-[65px] w-[6px] h-[18px] bg-[#666] shrink-0" />
        <div className="ml-[8px] w-px h-[9px] bg-[#a6a6a6] shrink-0" />
      </div>
      <svg width={14} height={14} viewBox="0 0 14 14" className="ml-[6px]"><path d="M0 5.500h14v3H0zM5.500 0h3v14h-3z" fill="#666" /></svg>
      <span className="ml-[22px] text-[16px]">90%</span>
    </div>
  );
}

function BottomStrip() {
  return (
    <div className="flex h-[11px] overflow-hidden">
      <div className="ml-[83px] w-[516px] bg-[#333]" />
      <div className="ml-[527px] w-[73px] bg-[#333]" />
      <div className="ml-[804px] w-[75px] text-[15px] leading-[20px] text-white pt-[3px] whitespace-nowrap">10:32:111</div>
      <div className="ml-[86px] w-[2px] bg-[#808080]" />
    </div>
  );
}

export default function App() {
  return (
    <div className="w-[2182px] h-[1402px] bg-black overflow-hidden font-['Open_Sans','Noto_Sans',sans-serif]">
      <div className="pt-[11px]">
        <div className="ml-[11px] w-[2160px]">
          <div className="relative bg-[#217346]">
            <Pattern />
            <TitleBar />
            <TabRow />
          </div>
          <Ribbon />
          <FormulaBar />
          <Sheet />
          <SheetTabs />
          <StatusBar />
        </div>
        <BottomStrip />
      </div>
    </div>
  );
}
